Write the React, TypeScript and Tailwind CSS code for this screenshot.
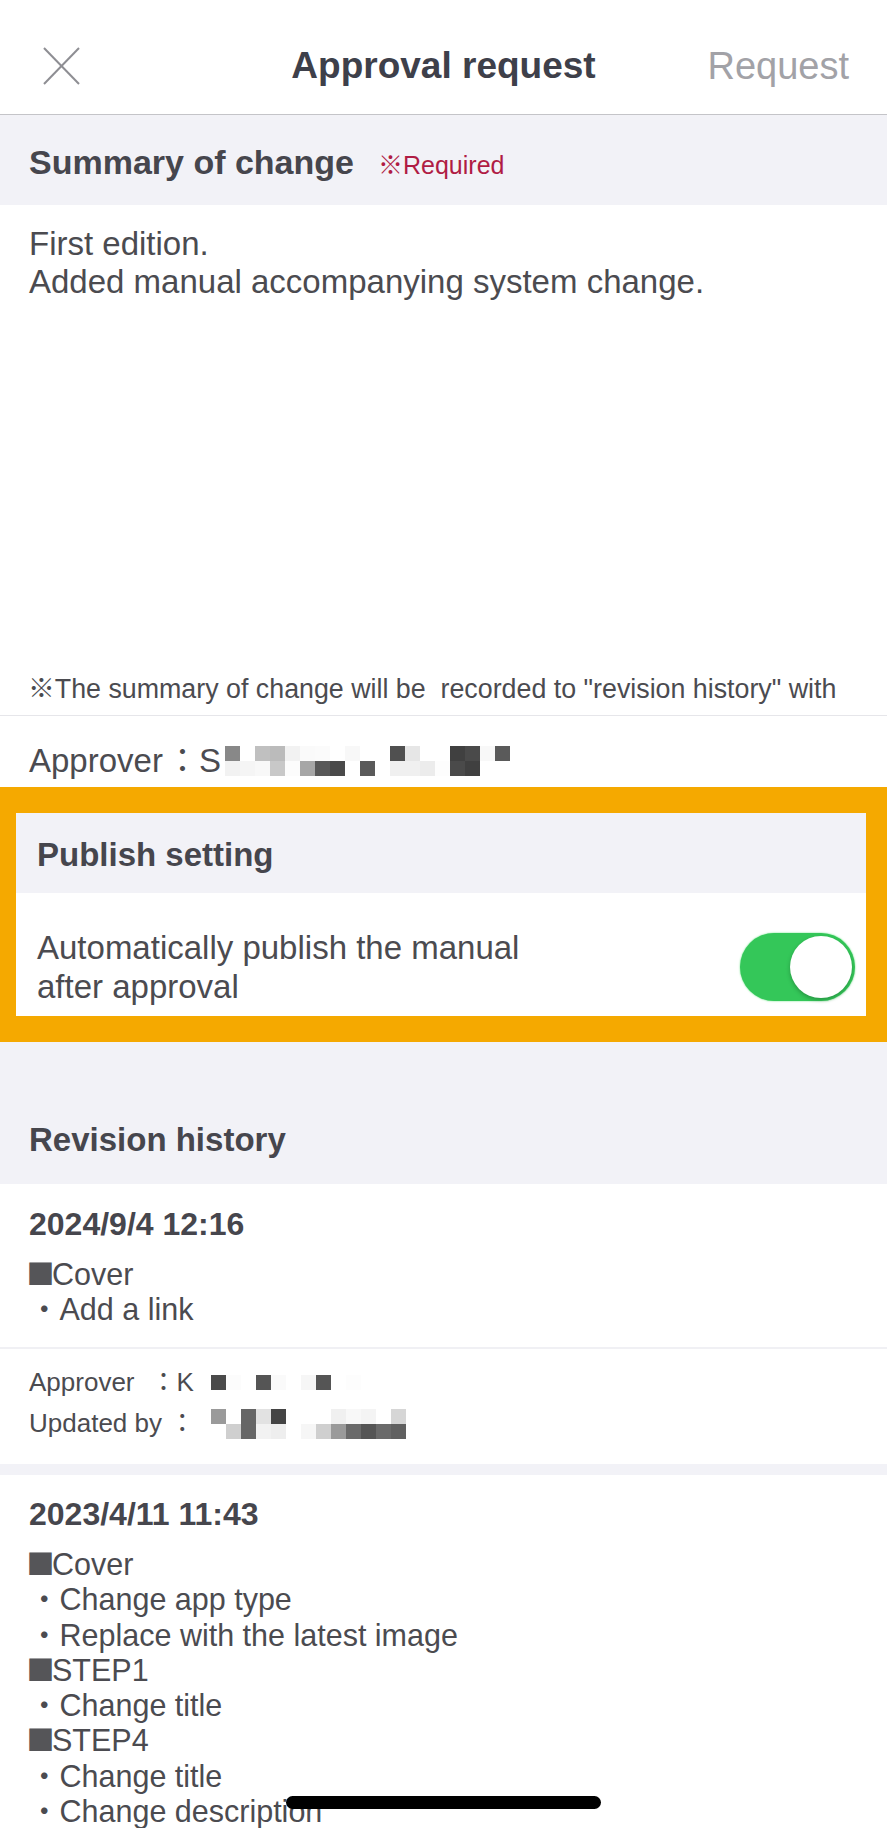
import React from "react";

const FONT = "font-['Liberation_Sans','Noto_Sans_CJK_JP',sans-serif]";

function Mosaic({ rows, cell = 15 }: { rows: string[][]; cell?: number }) {
  return (
    <span className="inline-flex flex-col align-middle">
      {rows.map((r, i) => (
        <span key={i} className="flex">
          {r.map((c, j) => (
            <span key={j} style={{ backgroundColor: c, width: cell, height: cell }} />
          ))}
        </span>
      ))}
    </span>
  );
}

const W = "#ffffff";
const approverMosaic = [
  ["#888888", W, "#c0c0c0", "#bbbbbb", "#f2f2f2", "#fafafa", "#fbfbfb", W, "#f8f8f8", W, W, "#505050", "#e6e6e6", W, W, "#404040", "#4a4a4a", "#f8f8f8", "#5a5a5a"],
  ["#f2f2f2", "#f5f5f5", "#f8f8f8", "#c8c8c8", "#fcfcfc", "#a6a6a6", "#585858", "#4a4a4a", W, "#5a5a5a", W, "#f0f0f0", "#f0f0f0", "#ececec", "#fdfdfd", "#4a4a4a", "#404040", W, W],
];
const approverK = [["#4a4a4a", "#fcfcfc", W, "#555555", "#fafafa", W, "#f6f6f6", "#555555", W, "#fdfdfd"]];
const updatedBy = [
  ["#9a9a9a", W, "#666666", "#e2e2e2", "#444444", W, W, W, "#f0f0f0", "#f8f8f8", "#f4f4f4", W, "#d6d6d6"],
  [W, "#cfcfcf", "#666666", "#f2f2f2", "#eeeeee", W, "#f6f6f6", "#cfcfcf", "#9a9a9a", "#6a6a6a", "#555555", "#6a6a6a", "#606060"],
];

function Sq() {
  return (
    <span className="inline-flex w-[23px] justify-center text-[28px] leading-[28px] text-[#555558] font-['Noto_Sans_CJK_JP'] align-baseline">
      ■
    </span>
  );
}

export default function App() {
  return (
    <div className={`relative w-[887px] h-[1828px] overflow-hidden bg-white text-[#4b4b50] ${FONT}`}>
      {/* Header */}
      <div className="h-[115px] pt-[17px] border-b border-[#c4c4c8] grid grid-cols-[1fr_auto_1fr] items-center">
        <div className="pl-[43px] flex items-center">
          <svg width="37" height="38" viewBox="0 0 37 38" fill="none">
            <line x1="1" y1="1" x2="36" y2="37" stroke="#8e8e93" strokeWidth="2" />
            <line x1="36" y1="1" x2="1" y2="37" stroke="#8e8e93" strokeWidth="2" />
          </svg>
        </div>
        <div className="text-[37px] font-bold text-[#3e404a] leading-none">Approval request</div>
        <div className="flex justify-end pr-[38px] text-[38px] text-[#a2a2a7] leading-none">Request</div>
      </div>

      {/* Summary header */}
      <div className="h-[90px] bg-[#f2f2f7] flex items-center px-[29px] pt-[4px]">
        <div className="flex items-baseline">
          <span className="text-[34px] font-bold text-[#46464d]">Summary of change</span>
          <span className="ml-[24px] text-[25px] text-[#b01c44]">※Required</span>
        </div>
      </div>

      {/* Text area */}
      <div className="h-[511px] border-b border-[#e6e6ea] flex flex-col justify-between">
        <div className="pt-[20px] px-[29px] text-[33px] leading-[38px]">
          <div>First edition.</div>
          <div>Added manual accompanying system change.</div>
        </div>
        <div className="pb-[10px] px-[28px] text-[26.8px] leading-[32px] whitespace-pre">
          {'※The summary of change will be  recorded to "revision history" with'}
        </div>
      </div>

      {/* Approver */}
      <div className="h-[71px] pt-[19px] px-[29px] text-[33px] leading-[40px] flex items-center">
        <span>Approver</span>
        <span className="ml-[3px]">：</span>
        <span>S</span>
        <span className="ml-[4px] flex">
          <Mosaic rows={approverMosaic} />
        </span>
      </div>

      {/* Publish setting highlighted */}
      <div className="bg-[#f5a900] pl-[16px] pr-[21px] pt-[26px] pb-[26px]">
        <div className="h-[80px] bg-[#f2f2f7] flex items-center px-[21px] pt-[3px]">
          <span className="text-[33px] font-bold text-[#46464d]">Publish setting</span>
        </div>
        <div className="bg-white h-[123px] pt-[34px] pb-[10px] pl-[21px] pr-[11px] flex items-center justify-between">
          <div className="text-[33px] leading-[39px]">
            <div>Automatically publish the manual</div>
            <div>after approval</div>
          </div>
          <div className="w-[115px] h-[68px] rounded-full bg-[#34c759] flex items-center justify-end p-[3px] shadow-[0_0_2px_#5ee07a]">
            <div className="w-[62px] h-[62px] rounded-full bg-white shadow-[0_2px_4px_rgba(0,0,0,0.25)]" />
          </div>
        </div>
      </div>

      {/* Revision history header */}
      <div className="h-[142px] bg-[#f2f2f7] flex items-end px-[29px] pb-[24px]">
        <span className="text-[33px] leading-[40px] font-bold text-[#46464d]">Revision history</span>
      </div>

      {/* Card 1 */}
      <div className="pt-[21px] pb-[20px] px-[29px]">
        <div className="text-[32px] font-bold leading-[38px] text-[#46464d]">2024/9/4 12:16</div>
        <div className="mt-[14px] text-[30.5px] leading-[35px]">
          <div><Sq />Cover</div>
          <div>・Add a link</div>
        </div>
      </div>
      <div className="h-[2px] bg-[#f0f0f4]" />
      <div className="pt-[13px] pb-[20px] px-[29px] text-[26px] leading-[41px]">
        <div className="flex items-center">
          <span>Approver</span>
          <span className="ml-[16px]">：</span>
          <span>K</span>
          <span className="ml-[17px] flex"><Mosaic rows={approverK} /></span>
        </div>
        <div className="flex items-center">
          <span>Updated by ：</span>
          <span className="ml-[16px] flex"><Mosaic rows={updatedBy} /></span>
        </div>
      </div>
      <div className="h-[11px] bg-[#f2f2f7]" />

      {/* Card 2 */}
      <div className="pt-[20px] px-[29px]">
        <div className="text-[32px] font-bold leading-[38px] text-[#46464d]">2023/4/11 11:43</div>
        <div className="mt-[14px] text-[30.5px] leading-[35.3px]">
          <div><Sq />Cover</div>
          <div>・Change app type</div>
          <div>・Replace with the latest image</div>
          <div><Sq />STEP1</div>
          <div>・Change title</div>
          <div><Sq />STEP4</div>
          <div>・Change title</div>
          <div>・Change description</div>
        </div>
      </div>

      {/* Home indicator */}
      <div className="absolute left-[286px] top-[1796px] w-[315px] h-[13px] rounded-full bg-black" />
    </div>
  );
}
